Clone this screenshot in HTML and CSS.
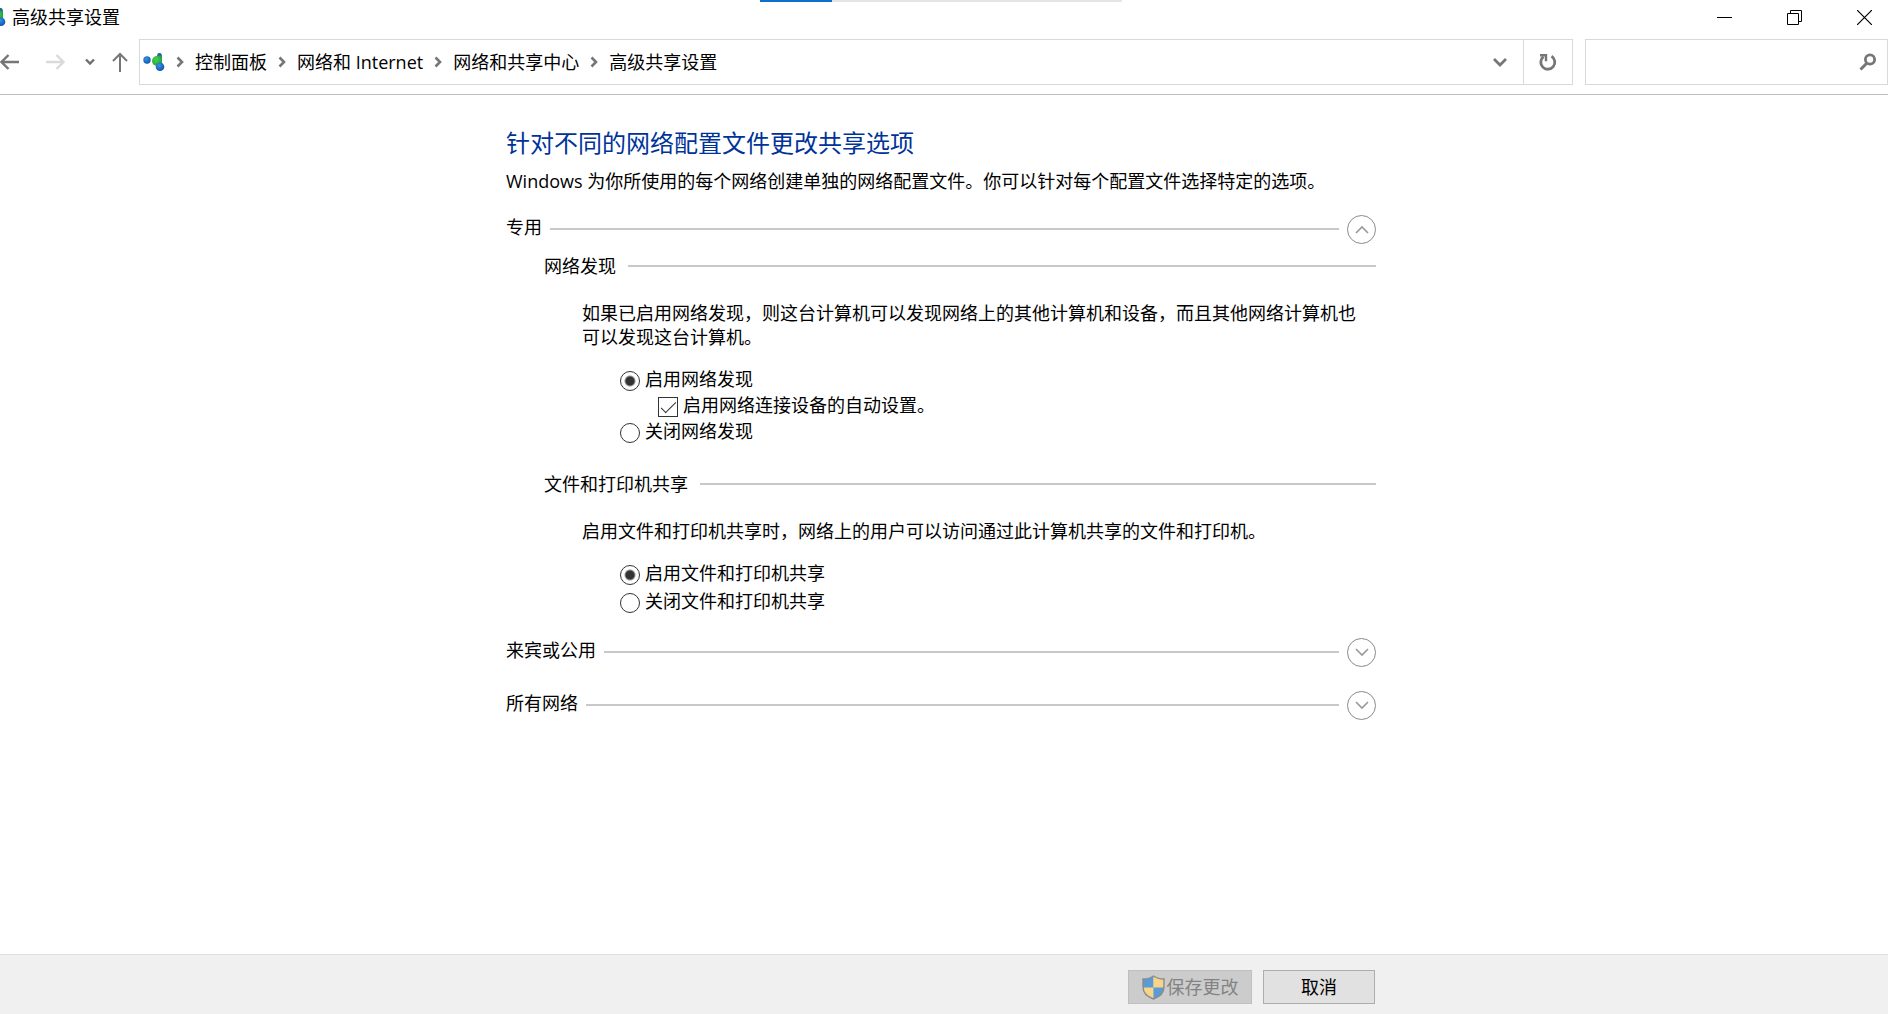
FILE: index.html
```html
<!DOCTYPE html>
<html lang="zh-CN">
<head>
<meta charset="utf-8">
<title>高级共享设置</title>
<link rel="stylesheet" href="styles.css">
</head>
<body>
<svg class="defs" aria-hidden="true">
  <defs>
    <radialGradient id="blue" cx="40%" cy="35%" r="65%"><stop offset="0" stop-color="#3d93e0"/><stop offset="1" stop-color="#0b57b0"/></radialGradient>
    <radialGradient id="green" cx="40%" cy="35%" r="65%"><stop offset="0" stop-color="#45d04a"/><stop offset="1" stop-color="#22a63c"/></radialGradient>
    <symbol id="sharing" viewBox="0 0 22 18">
      <circle cx="4" cy="7" r="3.700" fill="url(#blue)"/>
      <circle cx="16.500" cy="2.300" r="2.300" fill="#1a5f9c"/>
      <path d="M12 5l4-3 3 1v9l-5 1z" fill="#249a58"/>
      <circle cx="14" cy="8" r="5" fill="url(#green)"/>
      <circle cx="17" cy="13.700" r="4.300" fill="url(#blue)"/>
    </symbol>
    <symbol id="crumb" viewBox="0 0 8 12"><path d="M1.500 1.500L6 6l-4.500 4.500" fill="none" stroke="#767676" stroke-width="2.600"/></symbol>
  </defs>
</svg>
<div class="window">
  <div class="progress"><div class="progress-fill"></div></div>
  <header class="chrome">
    <div class="titlebar">
      <svg class="title-icon" viewBox="16 0 6 18" aria-hidden="true"><use href="#sharing" width="22" height="18"/></svg>
      <h1 class="title">高级共享设置</h1>
      <div class="controls">
        <button class="icon-button" type="button" aria-label="最小化"><svg width="15" height="15"><path d="M0 7.500h15" stroke="#000"/></svg></button>
        <button class="icon-button" type="button" aria-label="还原"><svg width="15" height="15" fill="none" stroke="#000"><path d="M.5 3.500h11v11h-11zM3.500 3.500v-3h11v11h-3"/></svg></button>
        <button class="icon-button" type="button" aria-label="关闭"><svg width="15" height="15"><path d="M0 0l15 15M15 0L0 15" stroke="#000" stroke-width="1.200"/></svg></button>
      </div>
    </div>
    <div class="toolbar">
      <nav class="nav" aria-label="导航">
        <button class="icon-button" type="button" aria-label="后退"><svg width="19" height="16" fill="none" stroke="#767676" stroke-width="2.400"><path d="M19 8H2M8.500 1L1.500 8l7 7"/></svg></button>
        <button class="icon-button forward" type="button" aria-label="前进" disabled><svg width="19" height="16" fill="none" stroke="#dadada" stroke-width="2.400"><path d="M0 8h17M10.500 1l7 7-7 7"/></svg></button>
        <button class="icon-button recent" type="button" aria-label="最近的位置"><svg width="10" height="8" fill="none" stroke="#6e6e6e" stroke-width="2.400"><path d="M1 1.500l4 4 4-4"/></svg></button>
        <button class="icon-button" type="button" aria-label="向上"><svg width="16" height="20" fill="none" stroke="#767676" stroke-width="2"><path d="M8 20V2M1 9l7-7 7 7"/></svg></button>
      </nav>
      <div class="address">
        <svg class="place-icon" aria-hidden="true"><use href="#sharing"/></svg>
        <ol class="crumbs">
          <li class="crumb"><svg class="crumb-arrow"><use href="#crumb"/></svg><a href="#">控制面板</a></li>
          <li class="crumb"><svg class="crumb-arrow"><use href="#crumb"/></svg><a href="#">网络和 Internet</a></li>
          <li class="crumb"><svg class="crumb-arrow"><use href="#crumb"/></svg><a href="#">网络和共享中心</a></li>
          <li class="crumb"><svg class="crumb-arrow"><use href="#crumb"/></svg><a href="#">高级共享设置</a></li>
        </ol>
        <button class="icon-button history" type="button" aria-label="以前的位置"><svg width="14" height="10" fill="none" stroke="#767676" stroke-width="2.800"><path d="M1 2l6 6 6-6"/></svg></button>
        <button class="icon-button refresh" type="button" aria-label="刷新"><svg width="18" height="18" fill="none" stroke="#767676" stroke-width="2.800"><path d="M12.500 3.300a7 7 0 1 1-8 .4"/><path d="M1 2.300h6v6" stroke-width="2.400"/></svg></button>
      </div>
      <label class="search">
        <input class="search-input" type="search" aria-label="搜索">
        <svg width="18" height="18" fill="none" stroke="#767676"><circle cx="11" cy="6.500" r="4.600" stroke-width="2.800"/><path d="M7.500 10.500L1.500 16.500" stroke-width="3"/></svg>
      </label>
    </div>
  </header>

  <main class="main">
    <div class="content">
      <h2 class="heading">针对不同的网络配置文件更改共享选项</h2>
      <p class="intro">Windows 为你所使用的每个网络创建单独的网络配置文件。你可以针对每个配置文件选择特定的选项。</p>

      <section class="profile">
        <div class="profile-head">
          <h3 class="profile-name">专用</h3><span class="rule"></span>
          <button class="toggle" type="button" aria-label="折叠" aria-expanded="true"><svg width="14" height="9"><path d="M1 8l6-6 6 6"/></svg></button>
        </div>
        <section class="group">
          <div class="group-head"><h4 class="group-name">网络发现</h4><span class="rule"></span></div>
          <p class="note">如果已启用网络发现，则这台计算机可以发现网络上的其他计算机和设备，而且其他网络计算机也可以发现这台计算机。</p>
          <div class="options compact">
            <label class="option"><input class="radio" type="radio" name="discovery" checked>启用网络发现</label>
            <label class="option nested"><input class="check" type="checkbox" checked>启用网络连接设备的自动设置。</label>
            <label class="option"><input class="radio" type="radio" name="discovery">关闭网络发现</label>
          </div>
        </section>
        <section class="group">
          <div class="group-head"><h4 class="group-name">文件和打印机共享</h4><span class="rule"></span></div>
          <p class="note">启用文件和打印机共享时，网络上的用户可以访问通过此计算机共享的文件和打印机。</p>
          <div class="options">
            <label class="option"><input class="radio" type="radio" name="files" checked>启用文件和打印机共享</label>
            <label class="option"><input class="radio" type="radio" name="files">关闭文件和打印机共享</label>
          </div>
        </section>
      </section>

      <section class="profile">
        <div class="profile-head">
          <h3 class="profile-name">来宾或公用</h3><span class="rule"></span>
          <button class="toggle" type="button" aria-label="展开" aria-expanded="false"><svg width="14" height="9"><path d="M1 1l6 6 6-6"/></svg></button>
        </div>
      </section>
      <section class="profile">
        <div class="profile-head">
          <h3 class="profile-name">所有网络</h3><span class="rule"></span>
          <button class="toggle" type="button" aria-label="展开" aria-expanded="false"><svg width="14" height="9"><path d="M1 1l6 6 6-6"/></svg></button>
        </div>
      </section>
    </div>
  </main>

  <footer class="footer">
    <div class="actions">
      <button class="button save" type="button" disabled>
        <svg width="23" height="25" viewBox="0 0 23 25" aria-hidden="true">
          <path d="M11.500 1C8 3.500 5 4 1 4v8c0 6 5 10 10.500 12z" fill="#5b9bd5"/>
          <path d="M11.500 1C15 3.500 18 4 22 4v8c0 6-5 10-10.500 12z" fill="#f6d488"/>
          <path d="M1 12.500h10.500V24C6 22 1.500 18 1 12.500z" fill="#f6d488"/>
          <path d="M22 12.500H11.500V24C17 22 21.500 18 22 12.500z" fill="#5b9bd5"/>
          <path d="M11.500 1C8 3.500 5 4 1 4v8c0 6 5 10 10.500 12C17 22 22 18 22 12V4c-4 0-7-.5-10.500-3z" fill="none" stroke="#8b8b8b" stroke-width="1.400"/>
        </svg>保存更改</button>
      <button class="button cancel" type="button">取消</button>
    </div>
  </footer>
</div>
</body>
</html>
```
FILE: styles.css
```css
* { box-sizing: border-box; }

body {
  margin: 0;
  background: #fff;
  color: #000;
  font-family: "Open Sans", "Noto Sans CJK SC", sans-serif;
  font-size: 18px;
  font-weight: 400;
  line-height: 24px;
}

h1, h2, h3, h4, p, ol { margin: 0; padding: 0; font-size: 18px; font-weight: inherit; }
a { color: inherit; text-decoration: none; }
button, input { font: inherit; color: inherit; margin: 0; }
svg { display: block; flex: none; }

.defs { position: absolute; width: 0; height: 0; }

.window { display: flex; flex-direction: column; min-height: 100vh; }

.progress {
  position: absolute;
  top: 0;
  left: calc(50% - 184px);
  width: 362px;
  height: 2px;
  background: #e5e5e5;
}
.progress-fill { width: 20%; height: 100%; background: #0f6fce; }

.icon-button { display: flex; padding: 0; border: 0; background: none; }

.chrome { border-bottom: 1px solid #bdbdbd; padding-bottom: 9px; }

.titlebar { display: flex; align-items: center; height: 39px; padding: 0 16px 5px 0; }
.title-icon { width: 6px; height: 18px; margin-right: 6px; }
.controls { display: flex; gap: 55px; margin-left: auto; }

.toolbar { display: flex; height: 46px; }
.nav { display: flex; align-items: center; padding-right: 11px; }
.forward { margin-left: 27px; }
.recent { margin: 0 17px 0 20px; }

.address { display: flex; align-items: center; flex: 1; border: 1px solid #d9d9d9; padding-left: 3px; }
.place-icon { width: 22px; height: 18px; }
.crumbs { display: flex; flex: 1; list-style: none; }
.crumb { display: flex; align-items: center; gap: 11px; padding-left: 11px; }
.crumb-arrow { width: 8px; height: 12px; }
.history { margin-right: 16px; }
.refresh { align-self: stretch; align-items: center; justify-content: center; width: 49px; border-left: 1px solid #d9d9d9; }

.search { display: flex; align-items: center; width: 303px; margin-left: 12px; padding-right: 10px; border: 1px solid #d9d9d9; }
.search-input { flex: 1; min-width: 0; height: 100%; border: 0; outline: 0; background: none; }

.main { flex: 1; padding: 32px 6px 32px 0; }
.content { max-width: 870px; margin: 0 auto; }
.heading { color: #039; font-size: 24px; line-height: 32px; }
.intro { margin: 10px 0 21px; }

.profile + .profile { margin-top: 23px; }
.profile-head { display: flex; align-items: center; gap: 8px; height: 30px; }
.profile-name { padding-bottom: 5px; }
.rule { flex: 1; height: 2px; background: #c8c8c8; }
.toggle {
  display: flex;
  align-items: center;
  justify-content: center;
  width: 29px;
  height: 29px;
  padding: 0;
  border: 1px solid #8a8a8a;
  border-radius: 50%;
  background: #fff;
}
.toggle path { fill: none; stroke: #999; stroke-width: 1.600; }

.group { margin: 10px 0 29px; padding-left: 38px; }
.group + .group { margin-bottom: 24px; }
.group-head { display: flex; align-items: center; gap: 12px; }
.note { margin: 23px 0 17px; padding: 0 18px 0 38px; }

.options { display: flex; flex-direction: column; align-items: flex-start; gap: 4px; padding: 1px 0 0 76px; }
.compact { gap: 2px; }
.option { display: flex; align-items: flex-end; gap: 5px; }
.nested { margin-left: 38px; }

.radio, .check { appearance: none; flex: none; width: 20px; height: 20px; border: 1px solid #333; background: #fff; }
.radio { border-radius: 50%; }
.radio:checked { background: radial-gradient(circle, #333 4px, #fff 6px); }
.check { display: grid; place-items: center; }
.check:checked::before {
  content: "";
  width: 14px;
  height: 6px;
  border: solid #333;
  border-width: 0 0 1px 1px;
  transform: translateY(-2px) rotate(-45deg);
}

.footer { padding: 15px 8px 10px 0; border-top: 1px solid #dfdfdf; background: #f0f0f0; }
.actions { display: flex; justify-content: flex-end; gap: 11px; max-width: 870px; margin: 0 auto; }
.button {
  display: flex;
  align-items: center;
  justify-content: center;
  height: 34px;
  padding: 0;
  border: 1px solid #adadad;
  background: #e1e1e1;
}
.save { width: 124px; gap: 2px; border-color: #bfbfbf; background: #ccc; color: #838383; }
.cancel { width: 112px; }
```
